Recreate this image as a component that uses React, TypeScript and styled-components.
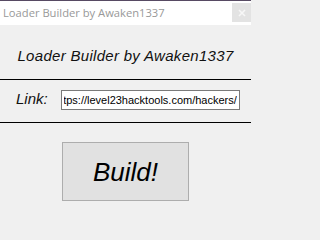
import { useEffect, useRef } from "react";
import styled, { createGlobalStyle } from "styled-components";

const GlobalStyle = createGlobalStyle`
  html, body {
    margin: 0;
    padding: 0;
    background: #f0f0f0;
  }
  * {
    box-sizing: border-box;
  }
`;

const App = (): JSX.Element => {
  const linkRef = useRef<HTMLInputElement>(null);

  // the form shows the end of the url, like a scrolled textbox
  useEffect(() => {
    const input = linkRef.current;
    if (input) {
      input.scrollLeft = input.scrollWidth;
    }
  }, []);

  return (
    <>
      <GlobalStyle />
      <Window>
        <TitleBar>
          <TitleText>Loader Builder by Awaken1337</TitleText>
          <CloseButton aria-label="Close">
            <svg width="8" height="8" viewBox="0 0 8 8">
              <path d="M1 1 L7 7 M7 1 L1 7" stroke="#f7f7f7" strokeWidth="1.6" />
            </svg>
          </CloseButton>
        </TitleBar>
        <Body>
          <Heading>Loader Builder by Awaken1337</Heading>
          <LinkPanel>
            <LinkLabel>Link:</LinkLabel>
            <LinkInput
              ref={linkRef}
              defaultValue="https://level23hacktools.com/hackers/"
            />
          </LinkPanel>
          <ButtonArea>
            <BuildButton>Build!</BuildButton>
          </ButtonArea>
        </Body>
      </Window>
    </>
  );
};

export default App;

const Window = styled.div`
  width: 251px;
  height: 209px;
  display: flex;
  flex-direction: column;
  overflow: hidden;
  background: #f0f0f0;
`;

const TitleBar = styled.div`
  height: 25px;
  flex-shrink: 0;
  display: flex;
  align-items: center;
  justify-content: space-between;
  padding-left: 3px;
  background: #ffffff;
  border-top: 1px solid #574a63;
`;

const TitleText = styled.span`
  font-family: "Open Sans", "Noto Sans", sans-serif;
  font-size: 11.2px;
  line-height: 16px;
  color: #999999;
  white-space: nowrap;
`;

const CloseButton = styled.div`
  width: 19px;
  height: 19px;
  align-self: flex-start;
  margin-top: 2px;
  display: flex;
  align-items: center;
  justify-content: center;
  background: #e3e3e3;
`;

const Body = styled.div`
  flex: 1;
  display: flex;
  flex-direction: column;
`;

const Heading = styled.h1`
  margin: 0;
  height: 54px;
  padding-top: 22px;
  text-align: center;
  font-family: "Liberation Sans", Arial, sans-serif;
  font-style: italic;
  font-weight: 400;
  font-size: 15px;
  line-height: 17px;
  letter-spacing: 0.3px;
  color: #111111;
  white-space: nowrap;
`;

const LinkPanel = styled.div`
  height: 44px;
  display: flex;
  align-items: flex-start;
  padding: 10px 0 0 16px;
  border-top: 1px solid #000000;
  border-bottom: 1px solid #000000;
`;

const LinkLabel = styled.label`
  width: 45px;
  flex-shrink: 0;
  font-family: "Liberation Sans", Arial, sans-serif;
  font-style: italic;
  font-size: 15px;
  line-height: 17px;
  color: #111111;
`;

const LinkInput = styled.input`
  width: 179px;
  height: 20px;
  margin: 0;
  padding: 0 2px;
  border: 1px solid #7a7a7a;
  border-radius: 0;
  background: #ffffff;
  outline: none;
  font-family: "Liberation Sans", Arial, sans-serif;
  font-size: 11px;
  color: #000000;
`;

const ButtonArea = styled.div`
  display: flex;
  padding: 19px 0 0 62px;
`;

const BuildButton = styled.button`
  width: 127px;
  height: 59px;
  padding: 0;
  display: flex;
  align-items: center;
  justify-content: center;
  background: #e1e1e1;
  border: 1px solid #adadad;
  border-radius: 0;
  font-family: "Liberation Sans", Arial, sans-serif;
  font-style: italic;
  font-size: 26px;
  line-height: 30px;
  color: #000000;
`;
